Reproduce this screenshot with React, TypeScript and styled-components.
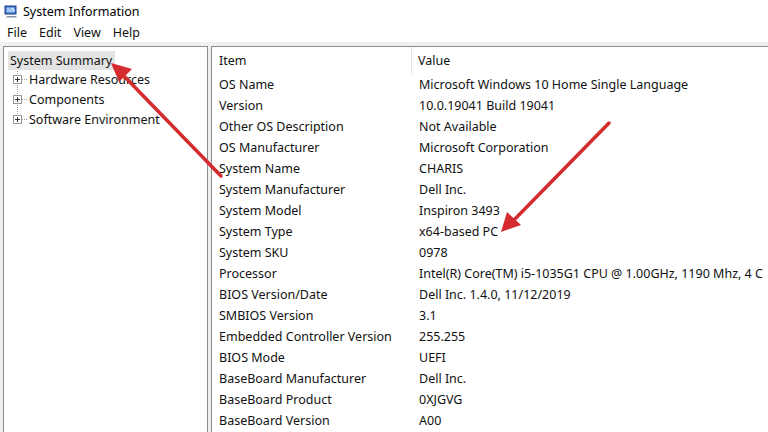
import styled, { createGlobalStyle } from 'styled-components'

const GlobalStyle = createGlobalStyle`
  html, body {
    margin: 0;
    padding: 0;
    background: #ffffff;
    overflow: hidden;
  }
  body {
    font-family: 'Noto Sans', 'Open Sans', sans-serif;
    color: #111;
  }
  * {
    box-sizing: border-box;
  }
`

const rows: [string, string][] = [
  ['OS Name', 'Microsoft Windows 10 Home Single Language'],
  ['Version', '10.0.19041 Build 19041'],
  ['Other OS Description', 'Not Available'],
  ['OS Manufacturer', 'Microsoft Corporation'],
  ['System Name', 'CHARIS'],
  ['System Manufacturer', 'Dell Inc.'],
  ['System Model', 'Inspiron 3493'],
  ['System Type', 'x64-based PC'],
  ['System SKU', '0978'],
  ['Processor', 'Intel(R) Core(TM) i5-1035G1 CPU @ 1.00GHz, 1190 Mhz, 4 C'],
  ['BIOS Version/Date', 'Dell Inc. 1.4.0, 11/12/2019'],
  ['SMBIOS Version', '3.1'],
  ['Embedded Controller Version', '255.255'],
  ['BIOS Mode', 'UEFI'],
  ['BaseBoard Manufacturer', 'Dell Inc.'],
  ['BaseBoard Product', '0XJGVG'],
  ['BaseBoard Version', 'A00'],
]

const treeItems = ['Hardware Resources', 'Components', 'Software Environment']

function AppIcon() {
  return (
    <svg width="14" height="13" viewBox="0 0 14 13">
      <rect x="1" y="1" width="11" height="8" fill="#3b6fc9" stroke="#24408a" />
      <rect x="2.5" y="2.5" width="8" height="5" fill="#9cc7f2" />
      <path d="M3 11 L12 11 L13 12.5 L2 12.5 Z" fill="#8a93a6" />
      <path d="M8 3 L11 6" stroke="#fff" strokeWidth="1" />
    </svg>
  )
}

function PlusBox() {
  return (
    <svg width="9" height="9" viewBox="0 0 9 9">
      <rect x="0.5" y="0.5" width="8" height="8" fill="#fff" stroke="#9a9a9a" />
      <path d="M2 4.5 H7 M4.5 2 V7" stroke="#333" strokeWidth="1" />
    </svg>
  )
}

export default function App() {
  return (
    <>
      <GlobalStyle />
      <Window>
        <TitleBar>
          <AppIcon />
          <span>System Information</span>
        </TitleBar>
        <MenuBar>
          <MenuItem>File</MenuItem>
          <MenuItem>Edit</MenuItem>
          <MenuItem>View</MenuItem>
          <MenuItem>Help</MenuItem>
        </MenuBar>
        <Body>
          <TreePane>
            <TreeRoot>System Summary</TreeRoot>
            <TreeChildren>
              {treeItems.map((t) => (
                <TreeNode key={t}>
                  <PlusBox />
                  <Dots />
                  <span>{t}</span>
                </TreeNode>
              ))}
            </TreeChildren>
          </TreePane>
          <ListPane>
            <HeaderRow>
              <HeadCell $width={193}>Item</HeadCell>
              <HeadCell>Value</HeadCell>
            </HeaderRow>
            {rows.map(([k, v]) => (
              <Row key={k}>
                <Cell $width={200}>{k}</Cell>
                <Cell>{v}</Cell>
              </Row>
            ))}
          </ListPane>
        </Body>
        <Arrows width="768" height="432" viewBox="0 0 768 432">
          <line x1="221" y1="176" x2="122" y2="74" stroke="#d42b2f" strokeWidth="3.5" strokeLinecap="round" />
          <polygon points="111,63 132,69 119,82" fill="#d42b2f" />
          <line x1="609" y1="123" x2="512" y2="222" stroke="#d42b2f" strokeWidth="3.5" strokeLinecap="round" />
          <polygon points="501,232 507,212 521,225" fill="#d42b2f" />
        </Arrows>
      </Window>
    </>
  )
}

const Window = styled.div`
  position: relative;
  width: 768px;
  height: 432px;
  background: #fff;
  display: flex;
  flex-direction: column;
  overflow: hidden;
`

const TitleBar = styled.div`
  height: 22px;
  display: flex;
  align-items: center;
  gap: 5px;
  padding-left: 4px;
  font-size: 12.5px;
  color: #000;
`

const MenuBar = styled.div`
  height: 20px;
  display: flex;
  align-items: center;
  padding-left: 7px;
  font-size: 12.5px;
`

const MenuItem = styled.span`
  margin-right: 12px;
`

const Body = styled.div`
  flex: 1;
  display: flex;
  gap: 3px;
  background: #f0f0f0;
  padding: 4px 0 0 3px;
  min-height: 0;
`

const TreePane = styled.div`
  width: 205px;
  flex-shrink: 0;
  background: #fff;
  border: 1px solid #8c8c8c;
  border-bottom: none;
  padding: 4px 0 0 4px;
  font-size: 12.5px;
`

const TreeRoot = styled.div`
  display: inline-block;
  background: #e3e3e3;
  padding: 1px 3px 1px 2px;
  line-height: 17px;
`

const TreeChildren = styled.div`
  margin-left: 9px;
  margin-top: -1px;
  border-left: 1px dotted #a0a0a0;
  height: 51px;
`

const TreeNode = styled.div`
  display: flex;
  align-items: center;
  height: 20px;
  margin-left: -5px;
  span {
    margin-left: 2px;
  }
`

const Dots = styled.i`
  width: 5px;
  border-top: 1px dotted #a0a0a0;
`

const ListPane = styled.div`
  flex: 1;
  background: #fff;
  border-left: 1px solid #8c8c8c;
  border-top: 1px solid #8c8c8c;
  font-size: 12.5px;
  padding-left: 7px;
  overflow: hidden;
`

const HeaderRow = styled.div`
  display: flex;
  height: 27px;
  align-items: center;
`

const HeadCell = styled.div<{ $width?: number }>`
  width: ${({ $width }) => ($width ? `${$width}px` : 'auto')};
  height: 100%;
  display: flex;
  align-items: center;
  white-space: nowrap;
  border-right: ${({ $width }) => ($width ? '1px solid #e5e5e5' : 'none')};
  padding-left: ${({ $width }) => ($width ? '0' : '6px')};
`

const Row = styled.div`
  display: flex;
  height: 21px;
  align-items: center;
  white-space: nowrap;
`

const Cell = styled.div<{ $width?: number }>`
  width: ${({ $width }) => ($width ? `${$width}px` : 'auto')};
  flex-shrink: 0;
`

const Arrows = styled.svg`
  position: absolute;
  left: 0;
  top: 0;
  pointer-events: none;
`
